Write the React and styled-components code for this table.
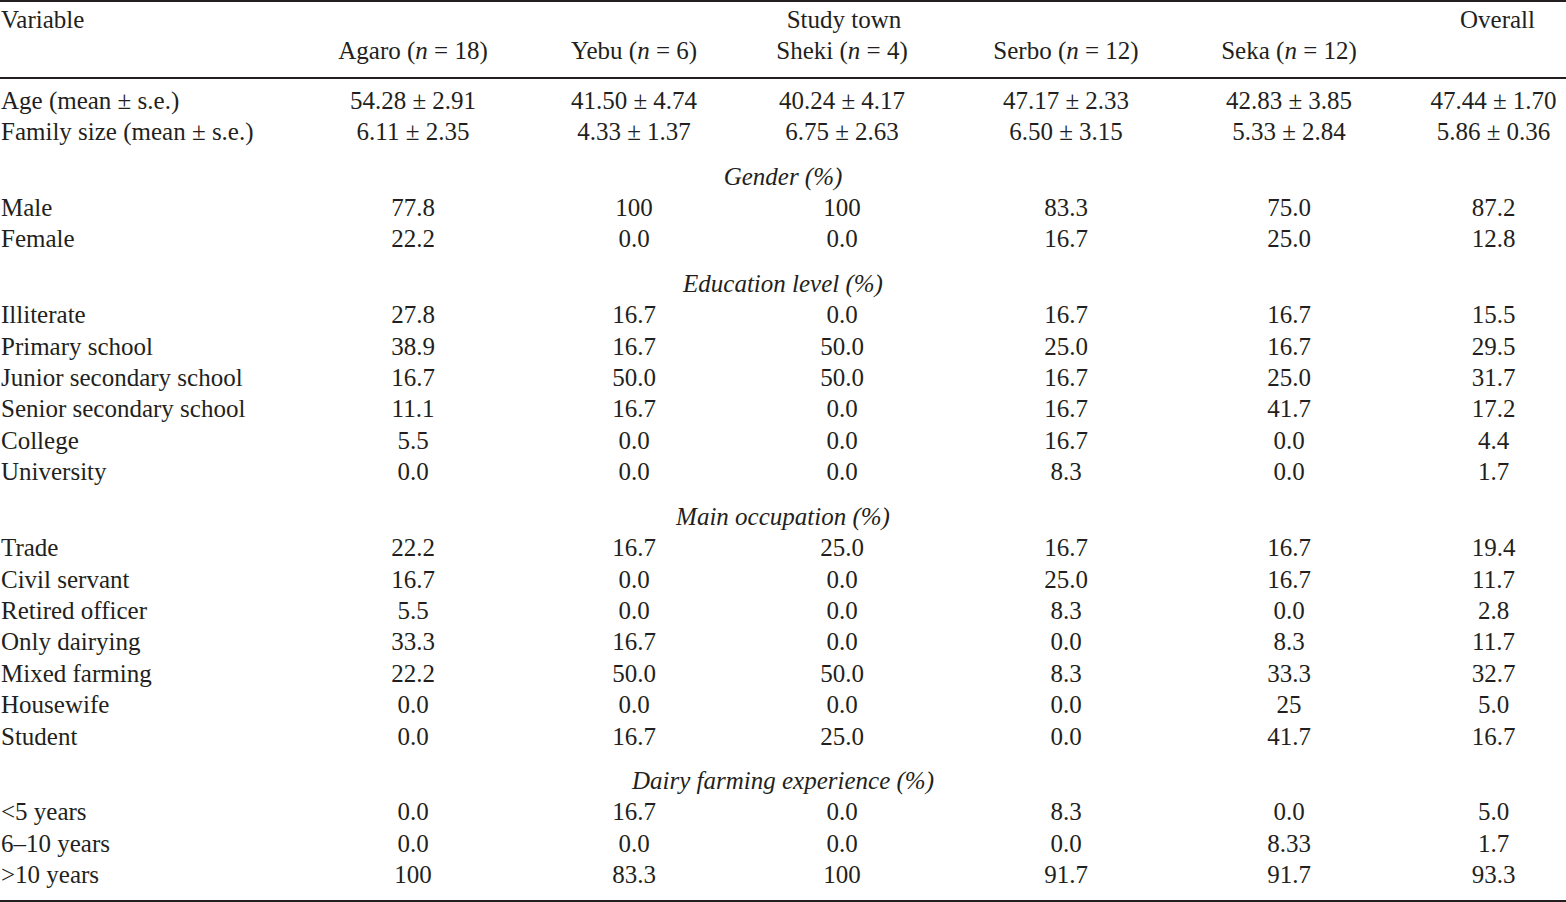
import React from 'react';
import styled, { createGlobalStyle } from 'styled-components';

const GlobalStyle = createGlobalStyle`
  html, body {
    margin: 0;
    padding: 0;
    background: #ffffff;
    overflow: hidden;
  }
  body {
    font-family: 'Liberation Serif', 'Times New Roman', serif;
    color: #231f20;
  }
`;

const COLUMNS = '303px 220px 222px 194px 254px 192px 181px';

const towns = [
  { name: 'Agaro', n: 18 },
  { name: 'Yebu', n: 6 },
  { name: 'Sheki', n: 4 },
  { name: 'Serbo', n: 12 },
  { name: 'Seka', n: 12 },
];

const summary = [
  ['Age (mean ± s.e.)', '54.28 ± 2.91', '41.50 ± 4.74', '40.24 ± 4.17', '47.17 ± 2.33', '42.83 ± 3.85', '47.44 ± 1.70'],
  ['Family size (mean ± s.e.)', '6.11 ± 2.35', '4.33 ± 1.37', '6.75 ± 2.63', '6.50 ± 3.15', '5.33 ± 2.84', '5.86 ± 0.36'],
];

const sections = [
  {
    title: 'Gender (%)',
    rows: [
      ['Male', '77.8', '100', '100', '83.3', '75.0', '87.2'],
      ['Female', '22.2', '0.0', '0.0', '16.7', '25.0', '12.8'],
    ],
  },
  {
    title: 'Education level (%)',
    rows: [
      ['Illiterate', '27.8', '16.7', '0.0', '16.7', '16.7', '15.5'],
      ['Primary school', '38.9', '16.7', '50.0', '25.0', '16.7', '29.5'],
      ['Junior secondary school', '16.7', '50.0', '50.0', '16.7', '25.0', '31.7'],
      ['Senior secondary school', '11.1', '16.7', '0.0', '16.7', '41.7', '17.2'],
      ['College', '5.5', '0.0', '0.0', '16.7', '0.0', '4.4'],
      ['University', '0.0', '0.0', '0.0', '8.3', '0.0', '1.7'],
    ],
  },
  {
    title: 'Main occupation (%)',
    rows: [
      ['Trade', '22.2', '16.7', '25.0', '16.7', '16.7', '19.4'],
      ['Civil servant', '16.7', '0.0', '0.0', '25.0', '16.7', '11.7'],
      ['Retired officer', '5.5', '0.0', '0.0', '8.3', '0.0', '2.8'],
      ['Only dairying', '33.3', '16.7', '0.0', '0.0', '8.3', '11.7'],
      ['Mixed farming', '22.2', '50.0', '50.0', '8.3', '33.3', '32.7'],
      ['Housewife', '0.0', '0.0', '0.0', '0.0', '25', '5.0'],
      ['Student', '0.0', '16.7', '25.0', '0.0', '41.7', '16.7'],
    ],
  },
  {
    title: 'Dairy farming experience (%)',
    rows: [
      ['<5 years', '0.0', '16.7', '0.0', '8.3', '0.0', '5.0'],
      ['6–10 years', '0.0', '0.0', '0.0', '0.0', '8.33', '1.7'],
      ['>10 years', '100', '83.3', '100', '91.7', '91.7', '93.3'],
    ],
  },
];

function App() {
  return (
    <>
      <GlobalStyle />
      <Table>
        <Head>
          <HeadLabel>Variable</HeadLabel>
          <Spanner>Study town</Spanner>
          <Overall>Overall</Overall>
          {towns.map((t) => (
            <TownName key={t.name}>
              {t.name} (<i>n</i> = {t.n})
            </TownName>
          ))}
        </Head>
        <Body>
          {summary.map((row) => (
            <Row key={row[0]} cells={row} />
          ))}
          {sections.map((s) => (
            <React.Fragment key={s.title}>
              <SectionTitle>{s.title}</SectionTitle>
              {s.rows.map((row) => (
                <Row key={row[0]} cells={row} />
              ))}
            </React.Fragment>
          ))}
        </Body>
      </Table>
    </>
  );
}

function Row({ cells }) {
  return (
    <>
      <Label>{cells[0]}</Label>
      {cells.slice(1).map((c, i) => (
        <Cell key={i} last={i === cells.length - 2}>
          {c}
        </Cell>
      ))}
    </>
  );
}

const Table = styled.div`
  width: 1566px;
  font-size: 25px;
  line-height: 31.4px;
  border-top: 2px solid #231f20;
  border-bottom: 2px solid #231f20;
`;

const Head = styled.div`
  display: grid;
  grid-template-columns: ${COLUMNS};
  padding: 2px 0 10px;
  border-bottom: 2px solid #231f20;
`;

const HeadLabel = styled.div`
  grid-column: 1;
  grid-row: 1;
  padding-left: 1px;
`;

const Spanner = styled.div`
  grid-column: 2 / 7;
  grid-row: 1;
  text-align: center;
`;

const Overall = styled.div`
  grid-column: 7;
  grid-row: 1;
  text-align: center;
  padding-left: 44px;
`;

const TownName = styled.div`
  grid-row: 2;
  text-align: center;
  white-space: nowrap;

  &:nth-of-type(4) { grid-column: 2; }
  &:nth-of-type(5) { grid-column: 3; }
  &:nth-of-type(6) { grid-column: 4; }
  &:nth-of-type(7) { grid-column: 5; }
  &:nth-of-type(8) { grid-column: 6; }

  i {
    font-style: italic;
  }
`;

const Body = styled.div`
  display: grid;
  grid-template-columns: ${COLUMNS};
  padding: 6px 0 9px;
`;

const Label = styled.div`
  padding-left: 1px;
  white-space: nowrap;
`;

const Cell = styled.div`
  text-align: center;
  white-space: nowrap;
  padding-left: ${(p) => (p.last ? '36px' : '0')};
`;

const SectionTitle = styled.div`
  grid-column: 1 / -1;
  text-align: center;
  font-style: italic;
  margin-top: 13px;
`;

export default App;
